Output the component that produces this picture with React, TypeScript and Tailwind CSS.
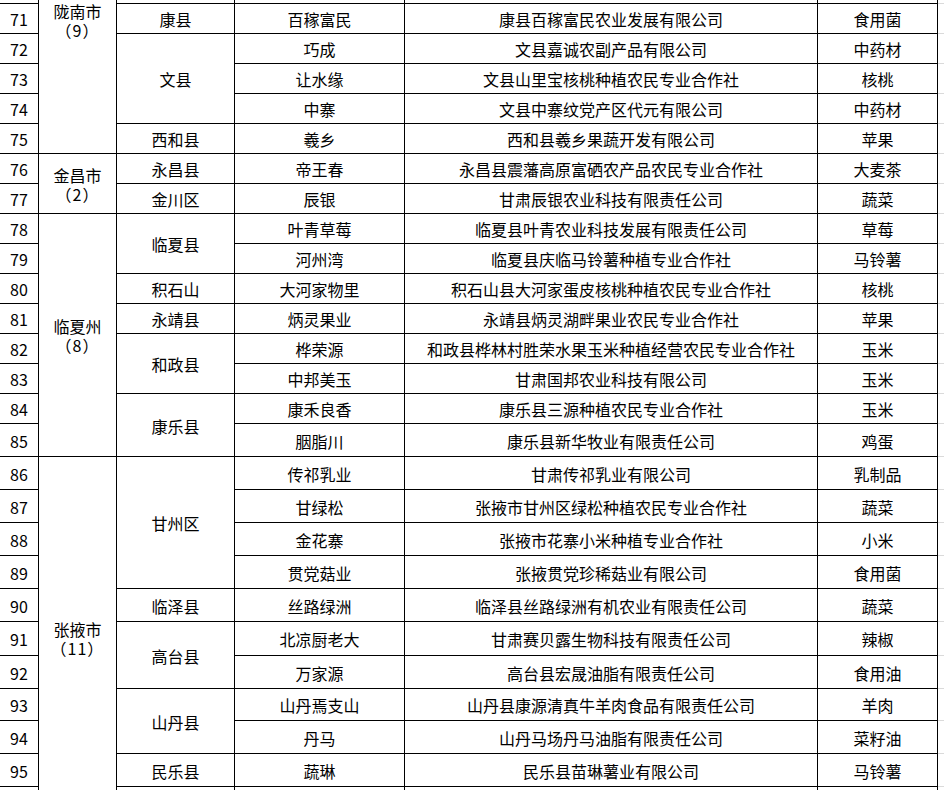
import type { ReactNode } from "react";

type Row = {
  no: string;
  city?: { name: string; count: string; span: number; top?: boolean };
  county?: { name: string; span: number };
  brand: string;
  company: string;
  product: string;
};

const SPAN: Record<number, string> = {
  1: "",
  2: "row-span-2",
  3: "row-span-3",
  4: "row-span-4",
  6: "row-span-6",
  8: "row-span-8",
  11: "row-span-11",
};

// row 70 and row 96 are only slivers at the top / bottom edge of the crop
const ROWS: Row[] = [
  { no: "", city: { name: "陇南市", count: "（9）", span: 6, top: true }, county: { name: "", span: 1 }, brand: "", company: "", product: "" },
  { no: "71", county: { name: "康县", span: 1 }, brand: "百稼富民", company: "康县百稼富民农业发展有限公司", product: "食用菌" },
  { no: "72", county: { name: "文县", span: 3 }, brand: "巧成", company: "文县嘉诚农副产品有限公司", product: "中药材" },
  { no: "73", brand: "让水缘", company: "文县山里宝核桃种植农民专业合作社", product: "核桃" },
  { no: "74", brand: "中寨", company: "文县中寨纹党产区代元有限公司", product: "中药材" },
  { no: "75", county: { name: "西和县", span: 1 }, brand: "羲乡", company: "西和县羲乡果蔬开发有限公司", product: "苹果" },
  { no: "76", city: { name: "金昌市", count: "（2）", span: 2 }, county: { name: "永昌县", span: 1 }, brand: "帝王春", company: "永昌县震藩高原富硒农产品农民专业合作社", product: "大麦茶" },
  { no: "77", county: { name: "金川区", span: 1 }, brand: "辰银", company: "甘肃辰银农业科技有限责任公司", product: "蔬菜" },
  { no: "78", city: { name: "临夏州", count: "（8）", span: 8 }, county: { name: "临夏县", span: 2 }, brand: "叶青草莓", company: "临夏县叶青农业科技发展有限责任公司", product: "草莓" },
  { no: "79", brand: "河州湾", company: "临夏县庆临马铃薯种植专业合作社", product: "马铃薯" },
  { no: "80", county: { name: "积石山", span: 1 }, brand: "大河家物里", company: "积石山县大河家蛋皮核桃种植农民专业合作社", product: "核桃" },
  { no: "81", county: { name: "永靖县", span: 1 }, brand: "炳灵果业", company: "永靖县炳灵湖畔果业农民专业合作社", product: "苹果" },
  { no: "82", county: { name: "和政县", span: 2 }, brand: "桦荣源", company: "和政县桦林村胜荣水果玉米种植经营农民专业合作社", product: "玉米" },
  { no: "83", brand: "中邦美玉", company: "甘肃国邦农业科技有限公司", product: "玉米" },
  { no: "84", county: { name: "康乐县", span: 2 }, brand: "康禾良香", company: "康乐县三源种植农民专业合作社", product: "玉米" },
  { no: "85", brand: "胭脂川", company: "康乐县新华牧业有限责任公司", product: "鸡蛋" },
  { no: "86", city: { name: "张掖市", count: "（11）", span: 11 }, county: { name: "甘州区", span: 4 }, brand: "传祁乳业", company: "甘肃传祁乳业有限公司", product: "乳制品" },
  { no: "87", brand: "甘绿松", company: "张掖市甘州区绿松种植农民专业合作社", product: "蔬菜" },
  { no: "88", brand: "金花寨", company: "张掖市花寨小米种植专业合作社", product: "小米" },
  { no: "89", brand: "贯党菇业", company: "张掖贯党珍稀菇业有限公司", product: "食用菌" },
  { no: "90", county: { name: "临泽县", span: 1 }, brand: "丝路绿洲", company: "临泽县丝路绿洲有机农业有限责任公司", product: "蔬菜" },
  { no: "91", county: { name: "高台县", span: 2 }, brand: "北凉厨老大", company: "甘肃赛贝露生物科技有限责任公司", product: "辣椒" },
  { no: "92", brand: "万家源", company: "高台县宏晟油脂有限责任公司", product: "食用油" },
  { no: "93", county: { name: "山丹县", span: 2 }, brand: "山丹焉支山", company: "山丹县康源清真牛羊肉食品有限责任公司", product: "羊肉" },
  { no: "94", brand: "丹马", company: "山丹马场丹马油脂有限责任公司", product: "菜籽油" },
  { no: "95", county: { name: "民乐县", span: 1 }, brand: "蔬琳", company: "民乐县苗琳薯业有限公司", product: "马铃薯" },
  { no: "", county: { name: "", span: 1 }, brand: "", company: "", product: "" },
];

function Cell({ span = 1, className = "", children }: { span?: number; className?: string; children?: ReactNode }) {
  return (
    <div
      className={`flex items-center justify-center whitespace-nowrap border-b border-r border-black pt-[2px] ${SPAN[span]} ${className}`}
    >
      {children}
    </div>
  );
}

export default function App() {
  return (
    <div className="h-[790px] w-[944px] overflow-hidden bg-white font-['Noto_Sans_CJK_SC',sans-serif] text-[16px] leading-[19px] text-black">
      <div className="grid grid-cols-[39px_78px_118px_170px_413px_120px_1fr] grid-rows-[4px_repeat(14,30px)_repeat(6,33px)_34px_33px_32px_33px_33px_33px]">
        {ROWS.map((r, i) => (
          <>
            <Cell key={`n${i}`}>{r.no}</Cell>
            {r.city && (
              <Cell
                key={`c${i}`}
                span={r.city.span}
                className={`flex-col ${r.city.top ? "justify-start pt-[1px]" : ""}`}
              >
                <div className="flex h-[19px] items-center overflow-visible">{r.city.name}</div>
                <div className="flex h-[19px] items-center overflow-visible tracking-[1px]">{r.city.count}</div>
              </Cell>
            )}
            {r.county && (
              <Cell key={`k${i}`} span={r.county.span}>
                {r.county.name}
              </Cell>
            )}
            <Cell key={`b${i}`}>{r.brand}</Cell>
            <Cell key={`o${i}`}>{r.company}</Cell>
            <Cell key={`p${i}`}>{r.product}</Cell>
            <div key={`f${i}`} className="border-b border-[#dadada]" />
          </>
        ))}
      </div>
    </div>
  );
}
